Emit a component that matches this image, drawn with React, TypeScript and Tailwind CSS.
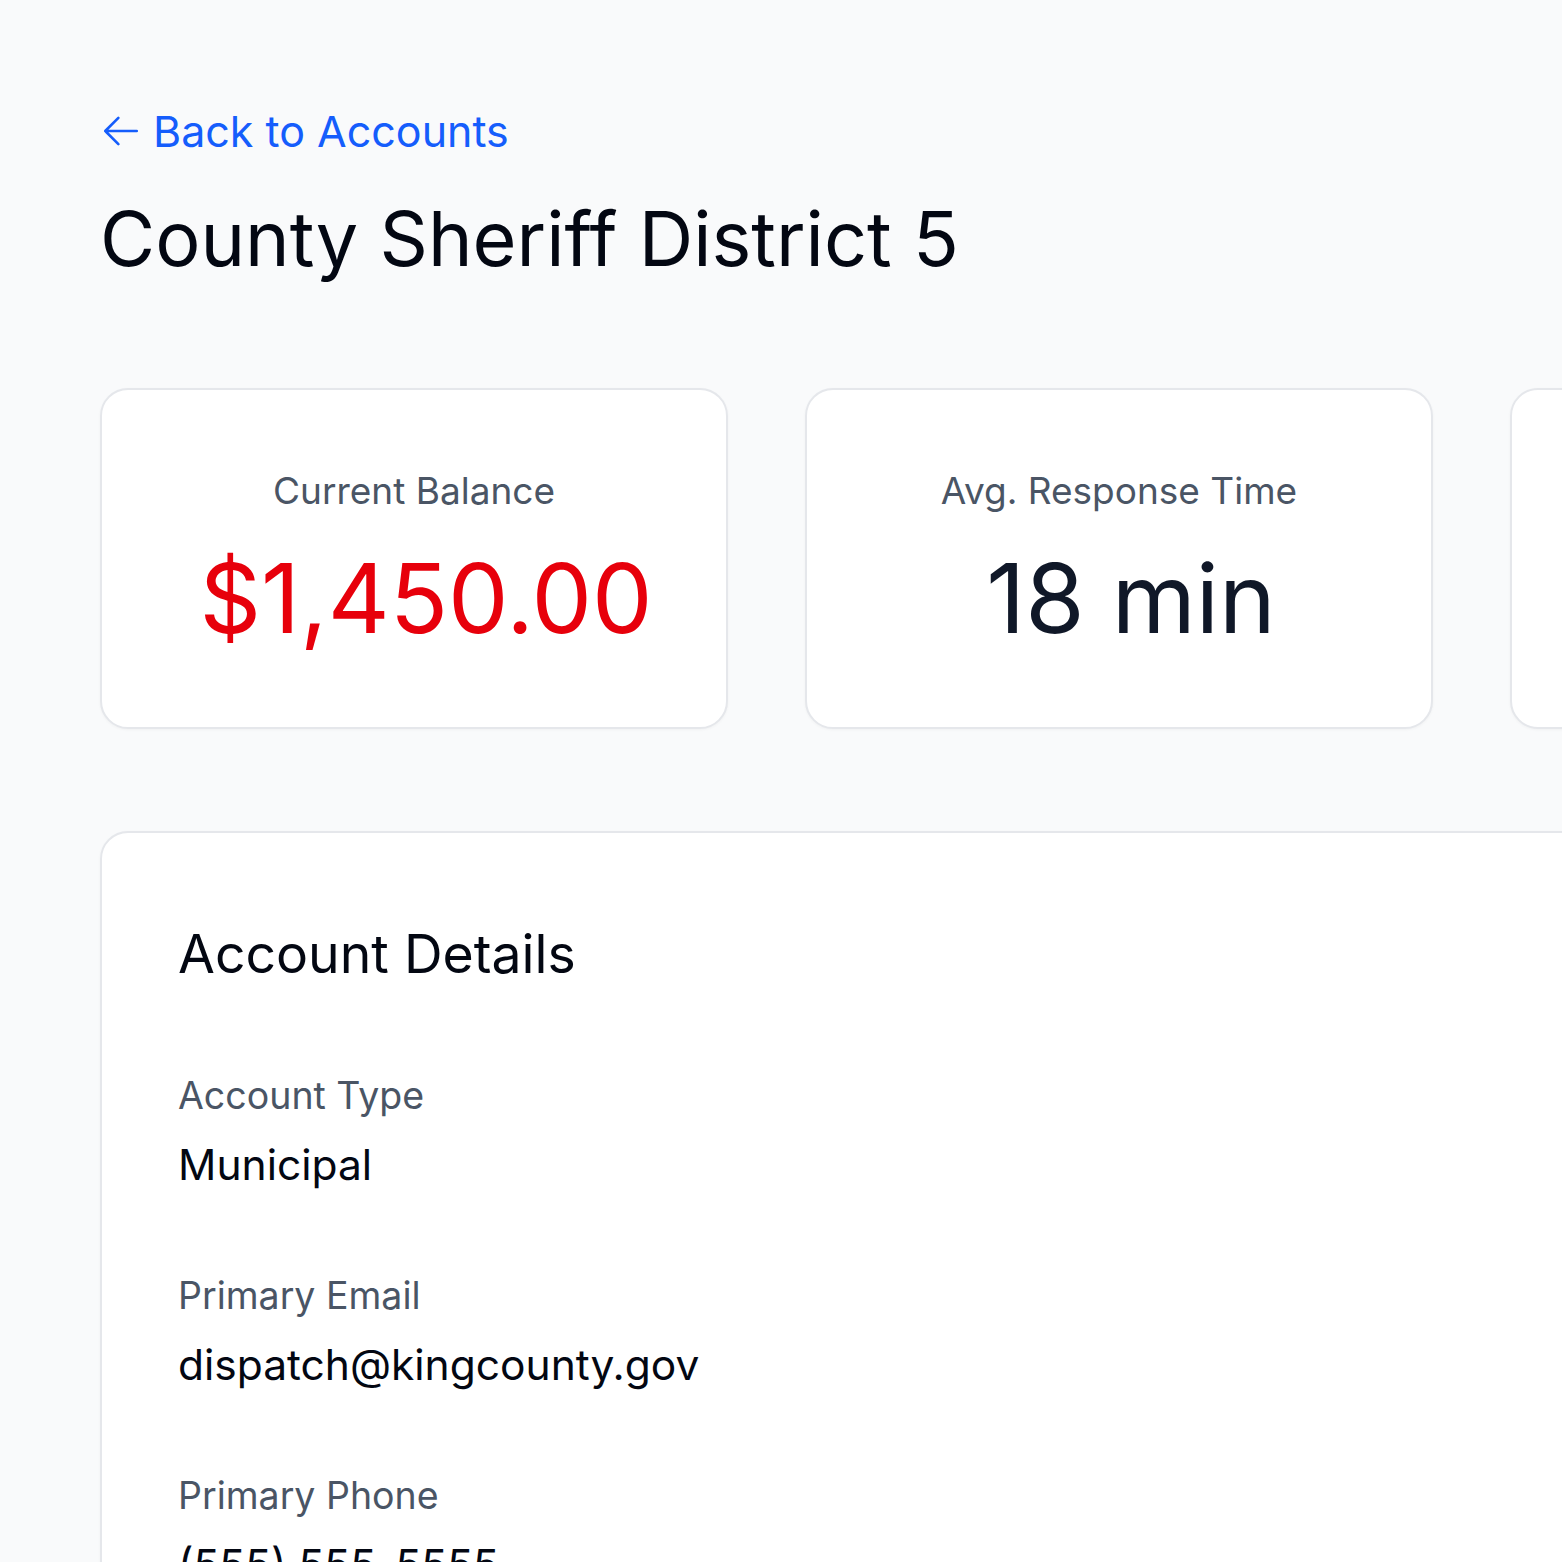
import React from 'react';

const details = [
  { label: 'Account Type', value: 'Municipal' },
  { label: 'Primary Email', value: 'dispatch@kingcounty.gov' },
  { label: 'Primary Phone', value: '(555) 555-5555' },
];

const ArrowLeft: React.FC = () => (
  <svg
    viewBox="0 0 24 24"
    fill="none"
    stroke="currentColor"
    strokeWidth={1.5}
    strokeLinecap="round"
    strokeLinejoin="round"
    className="w-[42px] h-[42px] shrink-0"
  >
    <path d="M10.5 19.5 3 12m0 0 7.5-7.5M3 12h18" />
  </svg>
);

const StatCard: React.FC<{ label: string; value: string; tone?: 'danger' }> = ({ label, value, tone }) => (
  <div className="w-[628px] h-[341px] shrink-0 flex flex-col items-center justify-center gap-[22px] bg-white border-2 border-gray-200 rounded-[28px] shadow-[0_1px_3px_rgba(0,0,0,0.04)]">
    <p className="text-[37px] leading-[56px] text-gray-600">{label}</p>
    <p className={`pl-[24px] text-[96px] leading-[114px] ${tone === 'danger' ? 'text-red-600' : 'text-gray-900'}`}>
      {value}
    </p>
  </div>
);

export default function App() {
  return (
    <div className="min-h-screen bg-gray-50 font-['Inter','Liberation_Sans',sans-serif] overflow-hidden">
      <div className="w-[2137px] pl-[100px] pt-[99px]">
        <a href="#" className="flex items-center gap-[11px] h-[64px] w-fit text-blue-600 text-[43px]">
          <ArrowLeft />
          <span>Back to Accounts</span>
        </a>
        <h1 className="mt-[31px] text-[75.5px] leading-[89px] text-gray-950">County Sheriff District 5</h1>

        <div className="mt-[105px] flex gap-[77px]">
          <StatCard label="Current Balance" value="$1,450.00" tone="danger" />
          <StatCard label="Avg. Response Time" value="18 min" />
          <StatCard label="Calls This Month" value="42" />
        </div>

        <section className="mt-[102px] bg-white border-2 border-gray-200 rounded-[28px] pl-[76px] pt-[88px] pb-[80px] shadow-[0_1px_3px_rgba(0,0,0,0.04)]">
          <h2 className="text-[53.5px] leading-[66px] text-gray-950">Account Details</h2>
          <dl className="mt-[84px] flex flex-col gap-[78px]">
            {details.map((d) => (
              <div key={d.label} className="flex flex-col gap-[16px]">
                <dt className="text-[37.5px] leading-[50px] text-gray-600">{d.label}</dt>
                <dd className="text-[42.5px] leading-[56px] text-gray-950">{d.value}</dd>
              </div>
            ))}
          </dl>
        </section>
      </div>
    </div>
  );
}
